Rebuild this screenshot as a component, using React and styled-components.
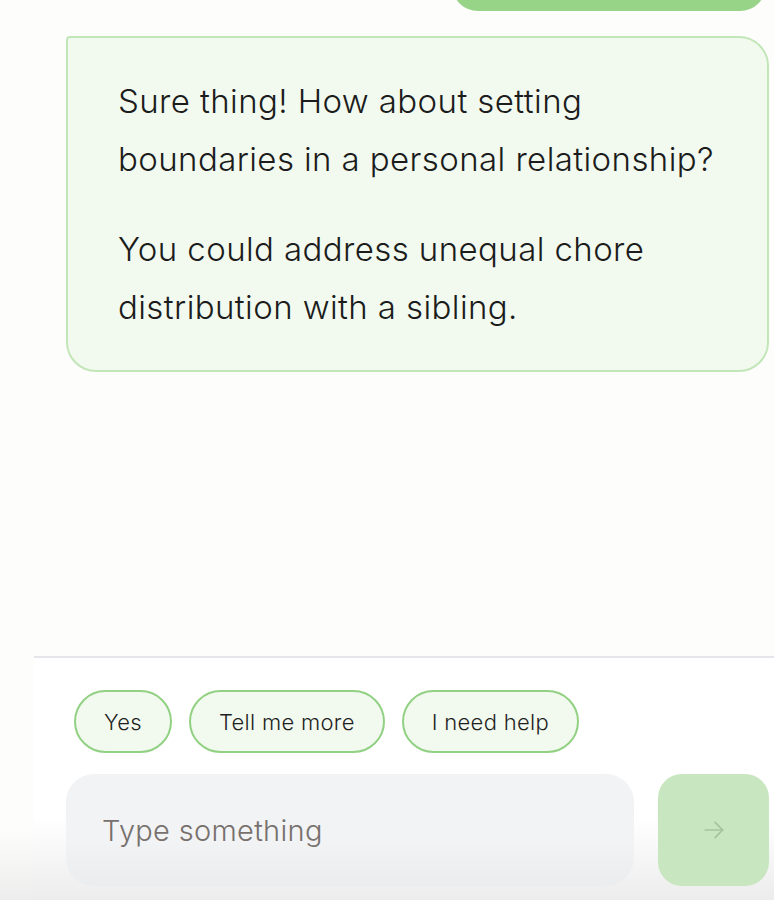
import styled, { createGlobalStyle } from 'styled-components';

const GlobalStyle = createGlobalStyle`
  html, body {
    margin: 0;
    padding: 0;
    background-color: #fdfdfb;
    font-family: 'Inter', 'Noto Sans', sans-serif;
    color: #1f1f1f;
  }
  * { box-sizing: border-box; }
`;

const Page = styled.div`
  height: 900px;
  display: flex;
  flex-direction: column;
  overflow: hidden;
  background: linear-gradient(to bottom, #fdfdfb 0, #fdfdfb 830px, #ededed 900px);
`;

const Messages = styled.div`
  flex: 1;
  display: flex;
  flex-direction: column;
  gap: 25px;
  padding: 0 5px 0 66px;
  background-color: #fdfdfb;
`;

const UserBubble = styled.div`
  align-self: flex-end;
  width: 314px;
  height: 61px;
  margin-top: -50px;
  margin-right: 3px;
  background-color: #98d487;
  border-radius: 26px;
`;

const BotBubble = styled.div`
  background-color: #f2faef;
  border: 2px solid #c3e6b9;
  border-radius: 4px 30px 30px 30px;
  padding: 34px 40px 34px 50px;
  display: flex;
  flex-direction: column;
  gap: 32px;
`;

const Paragraph = styled.p`
  margin: 0;
  font-size: 33px;
  font-weight: 360;
  line-height: 58px;
  color: #1c1c1c;
  letter-spacing: 0.4px;
`;

const Footer = styled.div`
  margin-left: 34px;
  border-top: 2px solid #e6e6ea;
  padding: 32px 5px 14px 32px;
  display: flex;
  flex-direction: column;
  gap: 21px;
  background: linear-gradient(to bottom, #ffffff 0, #ffffff 160px, #ececec 243px);
`;

const Chips = styled.div`
  display: flex;
  gap: 17px;
  padding-left: 8px;
`;

const Chip = styled.button`
  height: 63px;
  padding: 0 28px;
  border: 2px solid #92d183;
  border-radius: 32px;
  background-color: #f2faef;
  font-family: 'Inter', 'Noto Sans', sans-serif;
  font-size: 22px;
  font-weight: 360;
  color: #1f1f1f;
  letter-spacing: 0.3px;
  cursor: pointer;
`;

const InputRow = styled.div`
  display: flex;
  gap: 24px;
`;

const InputBox = styled.div`
  flex: 0 0 568px;
  height: 112px;
  border-radius: 28px;
  background: linear-gradient(to bottom, #f2f3f5 0, #f2f3f5 60%, #ebecee 100%);
  display: flex;
  align-items: center;
  padding: 0 36px;
`;

const Placeholder = styled.span`
  font-size: 29px;
  font-weight: 360;
  color: #77706d;
  letter-spacing: 0.3px;
`;

const SendButton = styled.button`
  flex: 0 0 111px;
  height: 112px;
  border: none;
  border-radius: 24px;
  background-color: #c8e6bf;
  display: flex;
  align-items: center;
  justify-content: center;
  cursor: pointer;
`;

function ArrowIcon() {
  return (
    <svg width="26" height="26" viewBox="0 0 24 24" fill="none" stroke="#a6c39d" strokeWidth="1.6" strokeLinecap="round" strokeLinejoin="round">
      <path d="M4 12h16" />
      <path d="M13 5l7 7-7 7" />
    </svg>
  );
}

export default function App() {
  const chips = ['Yes', 'Tell me more', 'I need help'];
  return (
    <>
      <GlobalStyle />
      <Page>
        <Messages>
          <UserBubble />
          <BotBubble>
            <Paragraph>Sure thing! How about setting boundaries in a personal relationship?</Paragraph>
            <Paragraph>You could address unequal chore distribution with a sibling.</Paragraph>
          </BotBubble>
        </Messages>
        <Footer>
          <Chips>
            {chips.map(c => <Chip key={c}>{c}</Chip>)}
          </Chips>
          <InputRow>
            <InputBox>
              <Placeholder>Type something</Placeholder>
            </InputBox>
            <SendButton aria-label="Send">
              <ArrowIcon />
            </SendButton>
          </InputRow>
        </Footer>
      </Page>
    </>
  );
}
